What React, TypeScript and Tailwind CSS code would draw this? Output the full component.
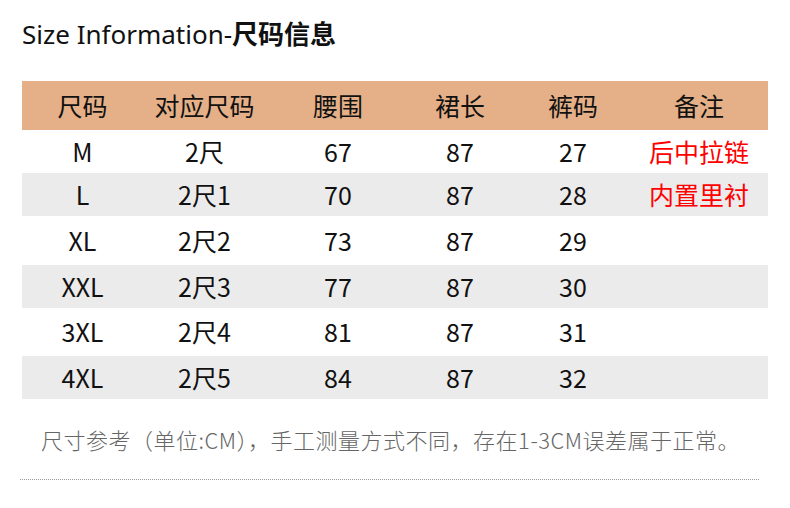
const rows = [
  { size: 'M', ref: '2尺', waist: '67', len: '87', pants: '27', note: '后中拉链', h: 'h-[43px]', bg: 'bg-white' },
  { size: 'L', ref: '2尺1', waist: '70', len: '87', pants: '28', note: '内置里衬', h: 'h-[43px]', bg: 'bg-[#ebebeb]' },
  { size: 'XL', ref: '2尺2', waist: '73', len: '87', pants: '29', note: '', h: 'h-[49px]', bg: 'bg-white' },
  { size: 'XXL', ref: '2尺3', waist: '77', len: '87', pants: '30', note: '', h: 'h-[43px]', bg: 'bg-[#ebebeb]' },
  { size: '3XL', ref: '2尺4', waist: '81', len: '87', pants: '31', note: '', h: 'h-[48px]', bg: 'bg-white' },
  { size: '4XL', ref: '2尺5', waist: '84', len: '87', pants: '32', note: '', h: 'h-[43px]', bg: 'bg-[#ebebeb]' },
];

const headers = ['尺码', '对应尺码', '腰围', '裙长', '裤码', '备注'];

const cols = 'grid grid-cols-[121px_123px_144px_100px_126px_132px]';

export default function App() {
  return (
    <div className="w-[790px] h-[508px] bg-white overflow-hidden font-['Noto_Sans','Noto_Sans_CJK_SC',sans-serif]">
      <div className="pl-[22px] pt-[16px] h-[81px]">
        <h1 className="text-[26px] leading-[36px] text-[#111] font-normal">
          Size Information-<span className="font-bold">尺码信息</span>
        </h1>
      </div>

      <div className="mx-[22px] w-[746px]">
        <div className={`${cols} h-[49px] items-center bg-[#e5b088] text-[25px] text-[#111] font-['Noto_Sans_CJK_SC',sans-serif]`}>
          {headers.map((h) => (
            <div key={h} className="text-center last:pr-[6px]">{h}</div>
          ))}
        </div>
        {rows.map((r) => (
          <div
            key={r.size}
            className={`${cols} ${r.h} ${r.bg} items-center text-[25px] text-[#111] font-['Noto_Sans_CJK_SC',sans-serif]`}
          >
            <div className="text-center">{r.size}</div>
            <div className="text-center">{r.ref}</div>
            <div className="text-center">{r.waist}</div>
            <div className="text-center">{r.len}</div>
            <div className="text-center">{r.pants}</div>
            <div className="text-center pr-[6px] text-[#ff0000]">{r.note}</div>
          </div>
        ))}
      </div>

      <p className="mt-[24px] pl-[41px] text-[22px] leading-[32px] tracking-[0.5px] text-[#666] font-light font-['Noto_Sans_CJK_SC',sans-serif]">
        尺寸参考（单位:CM），手工测量方式不同，存在1-3CM误差属于正常。
      </p>

      <div className="ml-[20px] mt-[24px] w-[739px] border-t border-dotted border-[#999]" />
    </div>
  );
}
